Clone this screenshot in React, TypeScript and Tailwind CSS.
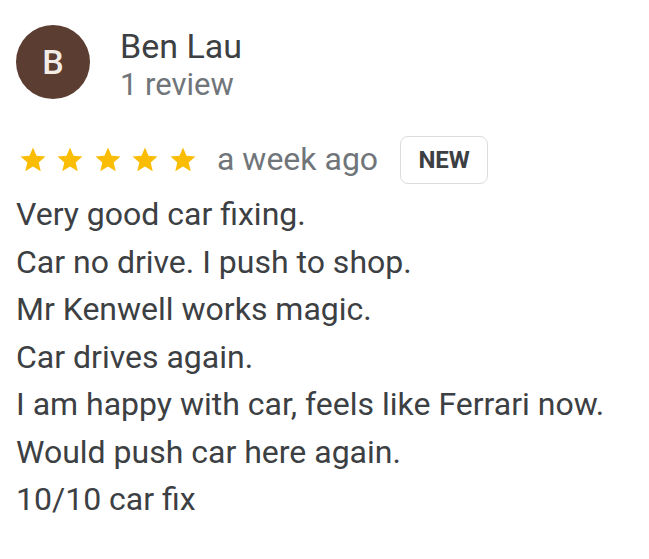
import React from "react";

const lines = [
  "Very good car fixing.",
  "Car no drive. I push to shop.",
  "Mr Kenwell works magic.",
  "Car drives again.",
  "I am happy with car, feels like Ferrari now.",
  "Would push car here again.",
  "10/10 car fix",
];

const Star = () => (
  <svg viewBox="0 0 24 24" className="w-[30px] h-[30px]" fill="#fbbc04">
    <path d="M12 17.27L18.18 21l-1.64-7.03L22 9.24l-7.19-.61L12 2 9.19 8.63 2 9.24l5.46 4.73L5.82 21z" />
  </svg>
);

const App = () => {
  return (
    <div className="w-[649px] h-[559px] bg-white overflow-hidden font-['Roboto',sans-serif] text-[#3c4043]">
      <div className="pt-[25px] pl-[16px] pr-4">
        <div className="flex items-start">
          <div className="w-[74px] h-[74px] rounded-full bg-[#5b3d31] flex items-center justify-center shrink-0">
            <span className="text-[34px] text-[#f3ece6] font-medium leading-none">B</span>
          </div>
          <div className="ml-[30px] mt-px">
            <div className="text-[34px] leading-[40px] text-[#3c4043]">Ben Lau</div>
            <div className="text-[31px] leading-[38px] text-[#70757a]">1 review</div>
          </div>
        </div>

        <div className="flex items-center mt-[32px] h-[48px]">
          <div className="flex items-center gap-[7.5px] pl-[1.5px]">
            <Star />
            <Star />
            <Star />
            <Star />
            <Star />
          </div>
          <span className="ml-[19.5px] text-[32px] text-[#70757a] leading-[48px] -mt-[3px]">a week ago</span>
          <span className="ml-[22px] h-[48px] w-[88px] border border-[#dadce0] rounded-lg flex items-center justify-center text-[24px] font-bold text-[#3c4043]">
            NEW
          </span>
        </div>

        <div className="mt-[7px]">
          {lines.map((l) => (
            <div key={l} className="text-[32px] leading-[47.5px] text-[#3c4043]">
              {l}
            </div>
          ))}
        </div>
      </div>
    </div>
  );
};

export default App;
